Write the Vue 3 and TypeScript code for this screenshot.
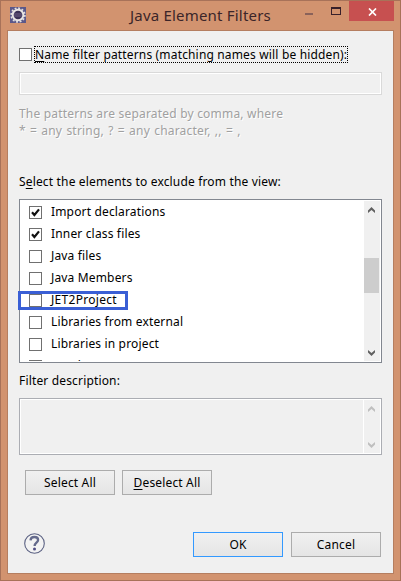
<script setup lang="ts">
import { ref } from 'vue'

interface FilterItem {
  label: string
  checked: boolean
  marked?: boolean
}

const items = ref<FilterItem[]>([
  { label: 'Import declarations', checked: true },
  { label: 'Inner class files', checked: true },
  { label: 'Java files', checked: false },
  { label: 'Java Members', checked: false },
  { label: 'JET2Project', checked: false, marked: true },
  { label: 'Libraries from external', checked: false },
  { label: 'Libraries in project', checked: false },
  { label: 'Local types', checked: false },
])
const patternsEnabled = ref(false)
</script>

<template>
  <div class="window">
    <header class="titlebar">
      <svg class="app-icon" width="16" height="16" viewBox="0 0 16 16">
        <rect width="16" height="16" fill="#5b5889" />
        <circle cx="8" cy="8" r="6.9" fill="none" stroke="#e4e1df" stroke-width="1.6" stroke-dasharray="1.9 1.71" />
        <circle cx="8" cy="8" r="5.3" fill="#3b3155" stroke="#e9e6e4" stroke-width="1.9" />
        <path d="M4 7h8M4 9h8" stroke="#706386" stroke-width="1" />
      </svg>
      <h1 class="title">Java Element Filters</h1>
      <div class="controls">
        <span class="minimize"></span>
        <span class="maximize"></span>
        <span class="close">
          <svg width="9" height="8" viewBox="0 0 9 8"><path d="M1 .5 8 7.5M8 .5 1 7.5" stroke="#fff" stroke-width="1.7" /></svg>
        </span>
      </div>
    </header>

    <main class="content">
      <div class="pattern-row" @click="patternsEnabled = !patternsEnabled">
        <span class="checkbox">
          <svg v-if="patternsEnabled" width="11" height="11" viewBox="0 0 11 11"><path d="M2 5.2 4.4 8 9 2.4" fill="none" stroke="#111" stroke-width="2.2" /></svg>
        </span>
        <span class="focus-label"><u>N</u>ame filter patterns (matching names will be hidden):</span>
      </div>
      <div class="pattern-input"></div>
      <p class="hint">The patterns are separated by comma, where<br /><span class="hint-syntax">* = any string, ? = any character, ,, = ,</span></p>

      <div class="label select-label">S<u>e</u>lect the elements to exclude from the view:</div>
      <div class="list">
        <div class="rows">
          <div v-for="item in items" :key="item.label" class="row" :class="{ marked: item.marked }" @click="item.checked = !item.checked">
            <span class="checkbox">
              <svg v-if="item.checked" width="11" height="11" viewBox="0 0 11 11"><path d="M2 5.2 4.4 8 9 2.4" fill="none" stroke="#111" stroke-width="2.2" /></svg>
            </span>
            <span class="row-text">{{ item.label }}</span>
          </div>
        </div>
        <div class="scrollbar">
          <svg class="arrow" width="7" height="6" viewBox="0 0 7 6"><path d="M0 6V3.5L3.5 0 7 3.5V6L3.5 3Z" /></svg>
          <div class="thumb"></div>
          <svg class="arrow" width="7" height="6" viewBox="0 0 7 6"><path d="M0 0V2.5L3.5 6 7 2.5V0L3.5 3Z" /></svg>
        </div>
      </div>

      <div class="label description-label">Filter description:</div>
      <div class="description">
        <div class="description-text"></div>
        <div class="scrollbar disabled">
          <svg class="arrow" width="7" height="6" viewBox="0 0 7 6"><path d="M0 6V3.5L3.5 0 7 3.5V6L3.5 3Z" /></svg>
          <svg class="arrow" width="7" height="6" viewBox="0 0 7 6"><path d="M0 0V2.5L3.5 6 7 2.5V0L3.5 3Z" /></svg>
        </div>
      </div>

      <div class="selection-buttons">
        <button>Select All</button>
        <button><u>D</u>eselect All</button>
      </div>

      <footer class="footer">
        <svg class="help" width="21" height="21" viewBox="0 0 21 21">
          <circle cx="10.5" cy="10.5" r="9.8" fill="#f3f3f3" stroke="#5d6384" stroke-width="1.1" />
          <path d="M6.5 7.4C6.7 5 8.4 4 10.4 4c2.2 0 3.7 1.2 3.7 3 0 2.7-3.5 2.8-3.5 6" fill="none" stroke="#646a8c" stroke-width="2.3" />
          <circle cx="10.5" cy="16" r="1.5" fill="#514f85" />
        </svg>
        <button class="primary">OK</button>
        <button>Cancel</button>
      </footer>
    </main>
  </div>
</template>

<style>
body {
  margin: 0;
  overflow: hidden;
}
</style>

<style scoped>
* {
  box-sizing: border-box;
}
.window {
  display: flex;
  flex-direction: column;
  width: 401px;
  height: 581px;
  padding: 0 6px 6px;
  border: 1px solid #a87259;
  background: #d2936f;
  font: 12px/16px "Noto Sans", "Open Sans", sans-serif;
  letter-spacing: 0.16px;
  color: #000;
  white-space: nowrap;
}
.titlebar {
  display: flex;
  height: 29px;
  flex: none;
}
.app-icon {
  margin: 6px 0 0 3px;
}
.title {
  margin: 0 0 0 104px;
  width: 142px;
  font-size: 15px;
  font-weight: 400;
  line-height: 29px;
  letter-spacing: 0.2px;
  color: #3b2529;
}
.controls {
  display: flex;
  margin-left: auto;
}
.minimize {
  width: 8px;
  height: 2px;
  margin: 12px 18px 0 0;
  background: #8a625a;
}
.maximize {
  width: 10px;
  height: 8px;
  margin: 6px 8px 0 0;
  border: 1px solid #38202a;
  border-top-width: 2px;
}
.close {
  display: flex;
  align-items: center;
  justify-content: center;
  width: 45px;
  height: 20px;
  padding: 2px 0 0 1px;
  background: #c75050;
}
.content {
  flex: 1;
  min-height: 0;
  padding: 15px 11px 0;
  border: 1px solid #b57e60;
  background: #f0f0f0;
}
u {
  text-decoration: underline;
  text-underline-offset: 2px;
  text-decoration-thickness: 1px;
  text-decoration-skip-ink: none;
}
.checkbox {
  display: block;
  flex: none;
  width: 13px;
  height: 13px;
  border: 1px solid #707070;
  background: #fff;
}
.checkbox svg {
  display: block;
}
.pattern-row {
  display: flex;
  height: 17px;
}
.pattern-row .checkbox {
  margin: 2px 2px 0 0;
}
.focus-label {
  width: 314px;
  height: 17px;
  border: 1px dotted #000;
  line-height: 16px;
}
.pattern-input {
  height: 23px;
  margin-top: 9px;
  border: 1px solid #d9d9d9;
  box-shadow: inset 0 0 0 1px #fff;
}
.hint {
  margin: 10px 0 0;
  line-height: 17px;
  height: 34px;
  letter-spacing: 0.2px;
  color: #a0a0a0;
  text-shadow: 1px 1px #fff;
}
.hint-syntax {
  letter-spacing: 0.2px;
  word-spacing: 0.9px;
}
.label {
  height: 16px;
}
.select-label {
  margin-top: 35px;
}
.list {
  display: flex;
  height: 164px;
  margin-top: 9px;
  padding: 1px;
  border: 1px solid #828790;
  background: #fff;
}
.rows {
  flex: 1;
  height: 160px;
  margin-left: -1px;
  clip-path: inset(0 0 0 -3px);
}
.row {
  position: relative;
  display: flex;
  height: 22px;
  padding: 5px 0 0 9px;
}
.row-text {
  margin: -2px 0 0 9px;
  line-height: 16px;
}
.row.marked .row-text {
  letter-spacing: 0.3px;
}
.row.marked::after {
  content: "";
  position: absolute;
  left: -2px;
  top: 2px;
  width: 104px;
  height: 13px;
  border: 3px solid #3a5fd5;
}
.scrollbar {
  display: flex;
  flex-direction: column;
  align-items: center;
  justify-content: space-between;
  width: 16px;
  padding: 6px 1px 5px 0;
  background: #f0f0f0;
}
.arrow {
  display: block;
  fill: #606060;
}
.thumb {
  width: 15px;
  height: 35px;
  margin-bottom: 12px;
  background: #cdcdcd;
}
.description-label {
  margin-top: 10px;
}
.description {
  display: flex;
  height: 57px;
  margin-top: 9px;
  border: 1px solid #abadb3;
  padding: 1px;
  background: #fff;
}
.description-text {
  flex: 1;
  margin-right: 1px;
  background: #f0f0f0;
}
.disabled .arrow {
  fill: #bfbfbf;
}
.selection-buttons {
  display: flex;
  gap: 7px;
  margin: 15px 0 0 6px;
}
button {
  width: 90px;
  height: 25px;
  padding: 0;
  border: 1px solid #acacac;
  background: linear-gradient(#f0f0f0, #e5e5e5);
  font: inherit;
  letter-spacing: 0.16px;
  color: #000;
}
.footer {
  display: flex;
  margin: 37px 1px 0 5px;
}
.help {
  margin: 1px auto 0 0;
}
.primary {
  margin-right: 8px;
  border-color: #3399ff;
}
</style>
